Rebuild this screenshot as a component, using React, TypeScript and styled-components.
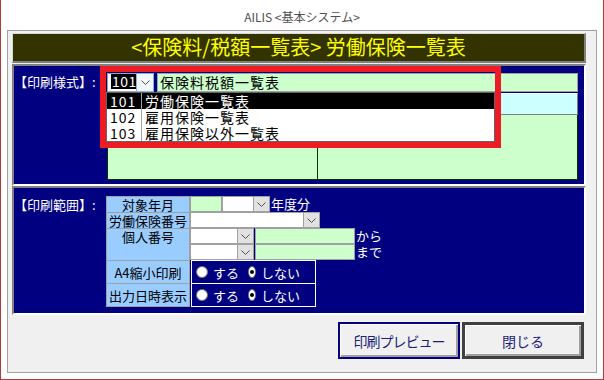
import React from "react";
import styled, { createGlobalStyle } from "styled-components";

const listItems = [
  { code: "101", name: "労働保険一覧表", selected: true },
  { code: "102", name: "雇用保険一覧表", selected: false },
  { code: "103", name: "雇用保険以外一覧表", selected: false },
];

const heads = [
  { label: "対象年月", h: 16, center: false },
  { label: "労働保険番号", h: 16, center: false },
  { label: "個人番号", h: 32, center: false },
  { label: "A4縮小印刷", h: 23, center: true },
  { label: "出力日時表示", h: 23, center: true },
];

function Chevron() {
  return (
    <svg width="9" height="5" viewBox="0 0 9 5">
      <path d="M0.5 0.5 L4.5 4.5 L8.5 0.5" fill="none" stroke="#505050" strokeWidth="1" />
    </svg>
  );
}

function Radio({ label, checked }: { label: string; checked?: boolean }) {
  return (
    <RadioItem>
      <Circle>{checked && <Dot />}</Circle>
      <span>{label}</span>
    </RadioItem>
  );
}

export default function App() {
  return (
    <>
      <GlobalStyle />
      <Window>
        <Caption>AILIS &lt;基本システム&gt;</Caption>
        <Panel>
          <TitleBar>&lt;保険料/税額一覧表&gt; 労働保険一覧表</TitleBar>

          <Section $h={122} $first>
            <SectionLabel $top={7}>【印刷様式】:</SectionLabel>
            <StyleArea>
              <ComboRow>
                <CodeBox>
                  <Selected>101</Selected>
                </CodeBox>
                <DropBtn $focus $w={18}>
                  <Chevron />
                </DropBtn>
                <NameField>保険料税額一覧表</NameField>
                <DropList>
                  {listItems.map((i) => (
                    <ListRow key={i.code} $selected={i.selected}>
                      <ListCode>{i.code}</ListCode>
                      <ListName>{i.name}</ListName>
                    </ListRow>
                  ))}
                </DropList>
              </ComboRow>
              <CyanField />
              <MemoRow>
                <MemoBox $w={210} />
                <MemoBox />
              </MemoRow>
            </StyleArea>
            <Annotation />
          </Section>

          <Section $h={129}>
            <SectionLabel $top={8}>【印刷範囲】:</SectionLabel>
            <RangeArea>
              <HeadCol>
                {heads.map((h) => (
                  <HeadCell key={h.label} $h={h.h} $center={h.center}>
                    {h.label}
                  </HeadCell>
                ))}
              </HeadCol>
              <ValueCol>
                <ValueRow>
                  <GreenBox $w={32} />
                  <WhiteBox $w={31} />
                  <DropBtn $w={17}>
                    <Chevron />
                  </DropBtn>
                  <Note>年度分</Note>
                </ValueRow>
                <ValueRow>
                  <WhiteBox $w={113} />
                  <DropBtn $w={17}>
                    <Chevron />
                  </DropBtn>
                </ValueRow>
                <ValueRow>
                  <WhiteBox $w={47} />
                  <DropBtn $w={17}>
                    <Chevron />
                  </DropBtn>
                  <GreenBox $w={100} $gap />
                  <Note>から</Note>
                </ValueRow>
                <ValueRow>
                  <WhiteBox $w={47} />
                  <DropBtn $w={17}>
                    <Chevron />
                  </DropBtn>
                  <GreenBox $w={100} $gap />
                  <Note>まで</Note>
                </ValueRow>
                <RadioBox>
                  <RadioRow>
                    <Radio label="する" />
                    <Radio label="しない" checked />
                  </RadioRow>
                  <RadioRow>
                    <Radio label="する" />
                    <Radio label="しない" checked />
                  </RadioRow>
                </RadioBox>
              </ValueCol>
            </RangeArea>
          </Section>

          <ButtonBar>
            <ActionButton $edge="#000080" $bw={2} $tight>
              印刷プレビュー
            </ActionButton>
            <ActionButton $edge="#404040" $bw={3}>
              閉じる
            </ActionButton>
          </ButtonBar>
        </Panel>
      </Window>
    </>
  );
}

const GlobalStyle = createGlobalStyle`
  html, body {
    margin: 0;
    padding: 0;
    background: #ffffff;
  }
  body {
    font-family: "Noto Sans CJK JP", "Noto Sans", sans-serif;
  }
  * {
    box-sizing: border-box;
  }
`;

const Window = styled.div`
  width: 604px;
  height: 380px;
  background: #ffffff;
  border: 1px solid #b03c3c;
  border-top: none;
  padding: 0 6px 6px;
  display: flex;
  flex-direction: column;
`;

const Caption = styled.div`
  height: 30px;
  padding-top: 3px;
  display: flex;
  align-items: center;
  justify-content: center;
  font-size: 12px;
  color: #505050;
`;

const Panel = styled.div`
  flex: 1;
  border: 1px solid #a0a0a0;
  background: #f0f0f0;
  padding: 2px 10px 0 4px;
  display: flex;
  flex-direction: column;
`;

const TitleBar = styled.div`
  height: 30px;
  background: #333300;
  border-top: 1px solid #d8d8d8;
  border-left: 1px solid #d8d8d8;
  border-right: 2px solid #808080;
  border-bottom: 2px solid #808080;
  color: #ffff00;
  font-size: 20px;
  line-height: 26px;
  text-align: center;
`;

const Section = styled.div<{ $h: number; $first?: boolean }>`
  position: relative;
  height: ${(p) => p.$h}px;
  margin-top: ${(p) => (p.$first ? 1 : 0)}px;
  background: #000080;
  border-style: solid;
  border-width: 2px;
  border-color: #808080 #ffffff #ffffff #808080;
  display: flex;
`;

const SectionLabel = styled.div<{ $top: number }>`
  width: 92px;
  flex: 0 0 auto;
  padding-top: ${(p) => p.$top}px;
  color: #ffffff;
  font-size: 13px;
  line-height: 18px;
  white-space: nowrap;
`;

const StyleArea = styled.div`
  margin-left: 1px;
  padding-top: 7px;
  width: 471px;
  display: flex;
  flex-direction: column;
`;

const ComboRow = styled.div`
  position: relative;
  height: 19px;
  display: flex;
`;

const CodeBox = styled.div`
  width: 29px;
  background: #ffffff;
  border: 1px solid #a0a0a0;
  border-right: none;
  padding: 0 0 0 3px;
`;

const Selected = styled.div`
  background: #000000;
  color: #ffffff;
  font-size: 14px;
  line-height: 15px;
  height: 15px;
  padding-left: 1px;
  letter-spacing: 0.5px;
`;

const DropBtn = styled.div<{ $focus?: boolean; $w: number }>`
  width: ${(p) => p.$w}px;
  flex: 0 0 auto;
  display: flex;
  align-items: center;
  justify-content: center;
  background: ${(p) => (p.$focus ? "#f4f8fc" : "#e1e1e1")};
  border: 1px solid ${(p) => (p.$focus ? "#7eb4ea" : "#a0a0a0")};
`;

const NameField = styled.div`
  flex: 1;
  margin-left: 3px;
  background: #ccffcc;
  border: 1px solid #a0a0a0;
  padding-left: 2px;
  font-size: 14px;
  line-height: 17px;
  letter-spacing: 1px;
  color: #000000;
`;

const DropList = styled.div`
  position: absolute;
  top: 19px;
  left: -1px;
  width: 389px;
  background: #ffffff;
  border: 1px solid #646464;
  z-index: 1;
`;

const ListRow = styled.div<{ $selected: boolean }>`
  height: 16px;
  display: flex;
  background: ${(p) => (p.$selected ? "#000000" : "#ffffff")};
  color: ${(p) => (p.$selected ? "#ffffff" : "#000000")};
  font-size: 14px;
  line-height: 16px;
  letter-spacing: 1px;
`;

const ListCode = styled.div`
  width: 35px;
  padding-left: 3px;
  border-right: 1px solid #a0a0a0;
`;

const ListName = styled.div`
  padding-left: 3px;
`;

const CyanField = styled.div`
  height: 22px;
  margin-top: 1px;
  background: #ccffff;
  border-style: solid;
  border-width: 1px;
  border-color: #ffffff #808080 #808080 #ffffff;
`;

const MemoRow = styled.div`
  height: 65px;
  display: flex;
  border: 1px solid #003300;
  border-top: none;
  background: #ccffcc;
`;

const MemoBox = styled.div<{ $w?: number }>`
  ${(p) => (p.$w ? `width: ${p.$w}px; border-right: 1px solid #003300;` : "flex: 1;")}
`;

const Annotation = styled.div`
  position: absolute;
  left: 86px;
  top: 0;
  width: 401px;
  height: 82px;
  border: 6px solid #ed1c24;
  pointer-events: none;
  z-index: 2;
`;

const RangeArea = styled.div`
  padding-top: 8px;
  display: flex;
`;

const HeadCol = styled.div`
  width: 84px;
  border: 1px solid #a0a0a0;
  border-bottom: none;
  align-self: flex-start;
`;

const HeadCell = styled.div<{ $h: number; $center: boolean }>`
  height: ${(p) => p.$h}px;
  background: #99ccff;
  border-bottom: 1px solid #a0a0a0;
  display: flex;
  justify-content: center;
  align-items: ${(p) => (p.$center ? "center" : "flex-start")};
  font-size: 13px;
  line-height: 15px;
  color: #000000;
  white-space: nowrap;
`;

const ValueCol = styled.div`
  display: flex;
  flex-direction: column;
`;

const ValueRow = styled.div`
  height: 16px;
  display: flex;
`;

const GreenBox = styled.div<{ $w: number; $gap?: boolean }>`
  width: ${(p) => p.$w}px;
  margin-left: ${(p) => (p.$gap ? 1 : 0)}px;
  background: #ccffcc;
  border: 1px solid #a0a0a0;
`;

const WhiteBox = styled.div<{ $w: number }>`
  width: ${(p) => p.$w}px;
  background: #ffffff;
  border: 1px solid #a0a0a0;
  border-right: none;
`;

const Note = styled.div`
  margin-left: 1px;
  color: #ffffff;
  font-size: 13px;
  line-height: 16px;
  white-space: nowrap;
`;

const RadioBox = styled.div`
  margin-left: 1px;
  width: 125px;
  border: 1px solid #ffffff;
`;

const RadioRow = styled.div`
  height: 23px;
  display: flex;
  align-items: center;
  padding-left: 4px;
  & + & {
    border-top: 1px solid #ffffff;
  }
  &:first-child {
    height: 22px;
  }
`;

const RadioItem = styled.div`
  width: 52px;
  display: flex;
  align-items: center;
  color: #ffffff;
  font-size: 13px;
  line-height: 15px;
  white-space: nowrap;
`;

const Circle = styled.div`
  width: 12px;
  height: 12px;
  margin-right: 5px;
  border-radius: 50%;
  background: #ffffff;
  border: 1px solid #707070;
  display: flex;
  align-items: center;
  justify-content: center;
`;

const Dot = styled.div`
  width: 4px;
  height: 4px;
  border-radius: 50%;
  background: #000000;
`;

const ButtonBar = styled.div`
  margin-top: 7px;
  padding-right: 2px;
  display: flex;
  justify-content: flex-end;
  gap: 2px;
`;

const ActionButton = styled.div<{ $edge: string; $bw: number; $tight?: boolean }>`
  width: 122px;
  height: 37px;
  border: ${(p) => p.$bw}px solid ${(p) => p.$edge};
  background: #f0f0f0;
  box-shadow: inset 1px 1px 0 #ffffff, inset -2px -2px 0 #a0a0a0;
  display: flex;
  align-items: center;
  justify-content: center;
  font-size: 14px;
  letter-spacing: ${(p) => (p.$tight ? "-1px" : "0")};
  color: #1e1e78;
`;
